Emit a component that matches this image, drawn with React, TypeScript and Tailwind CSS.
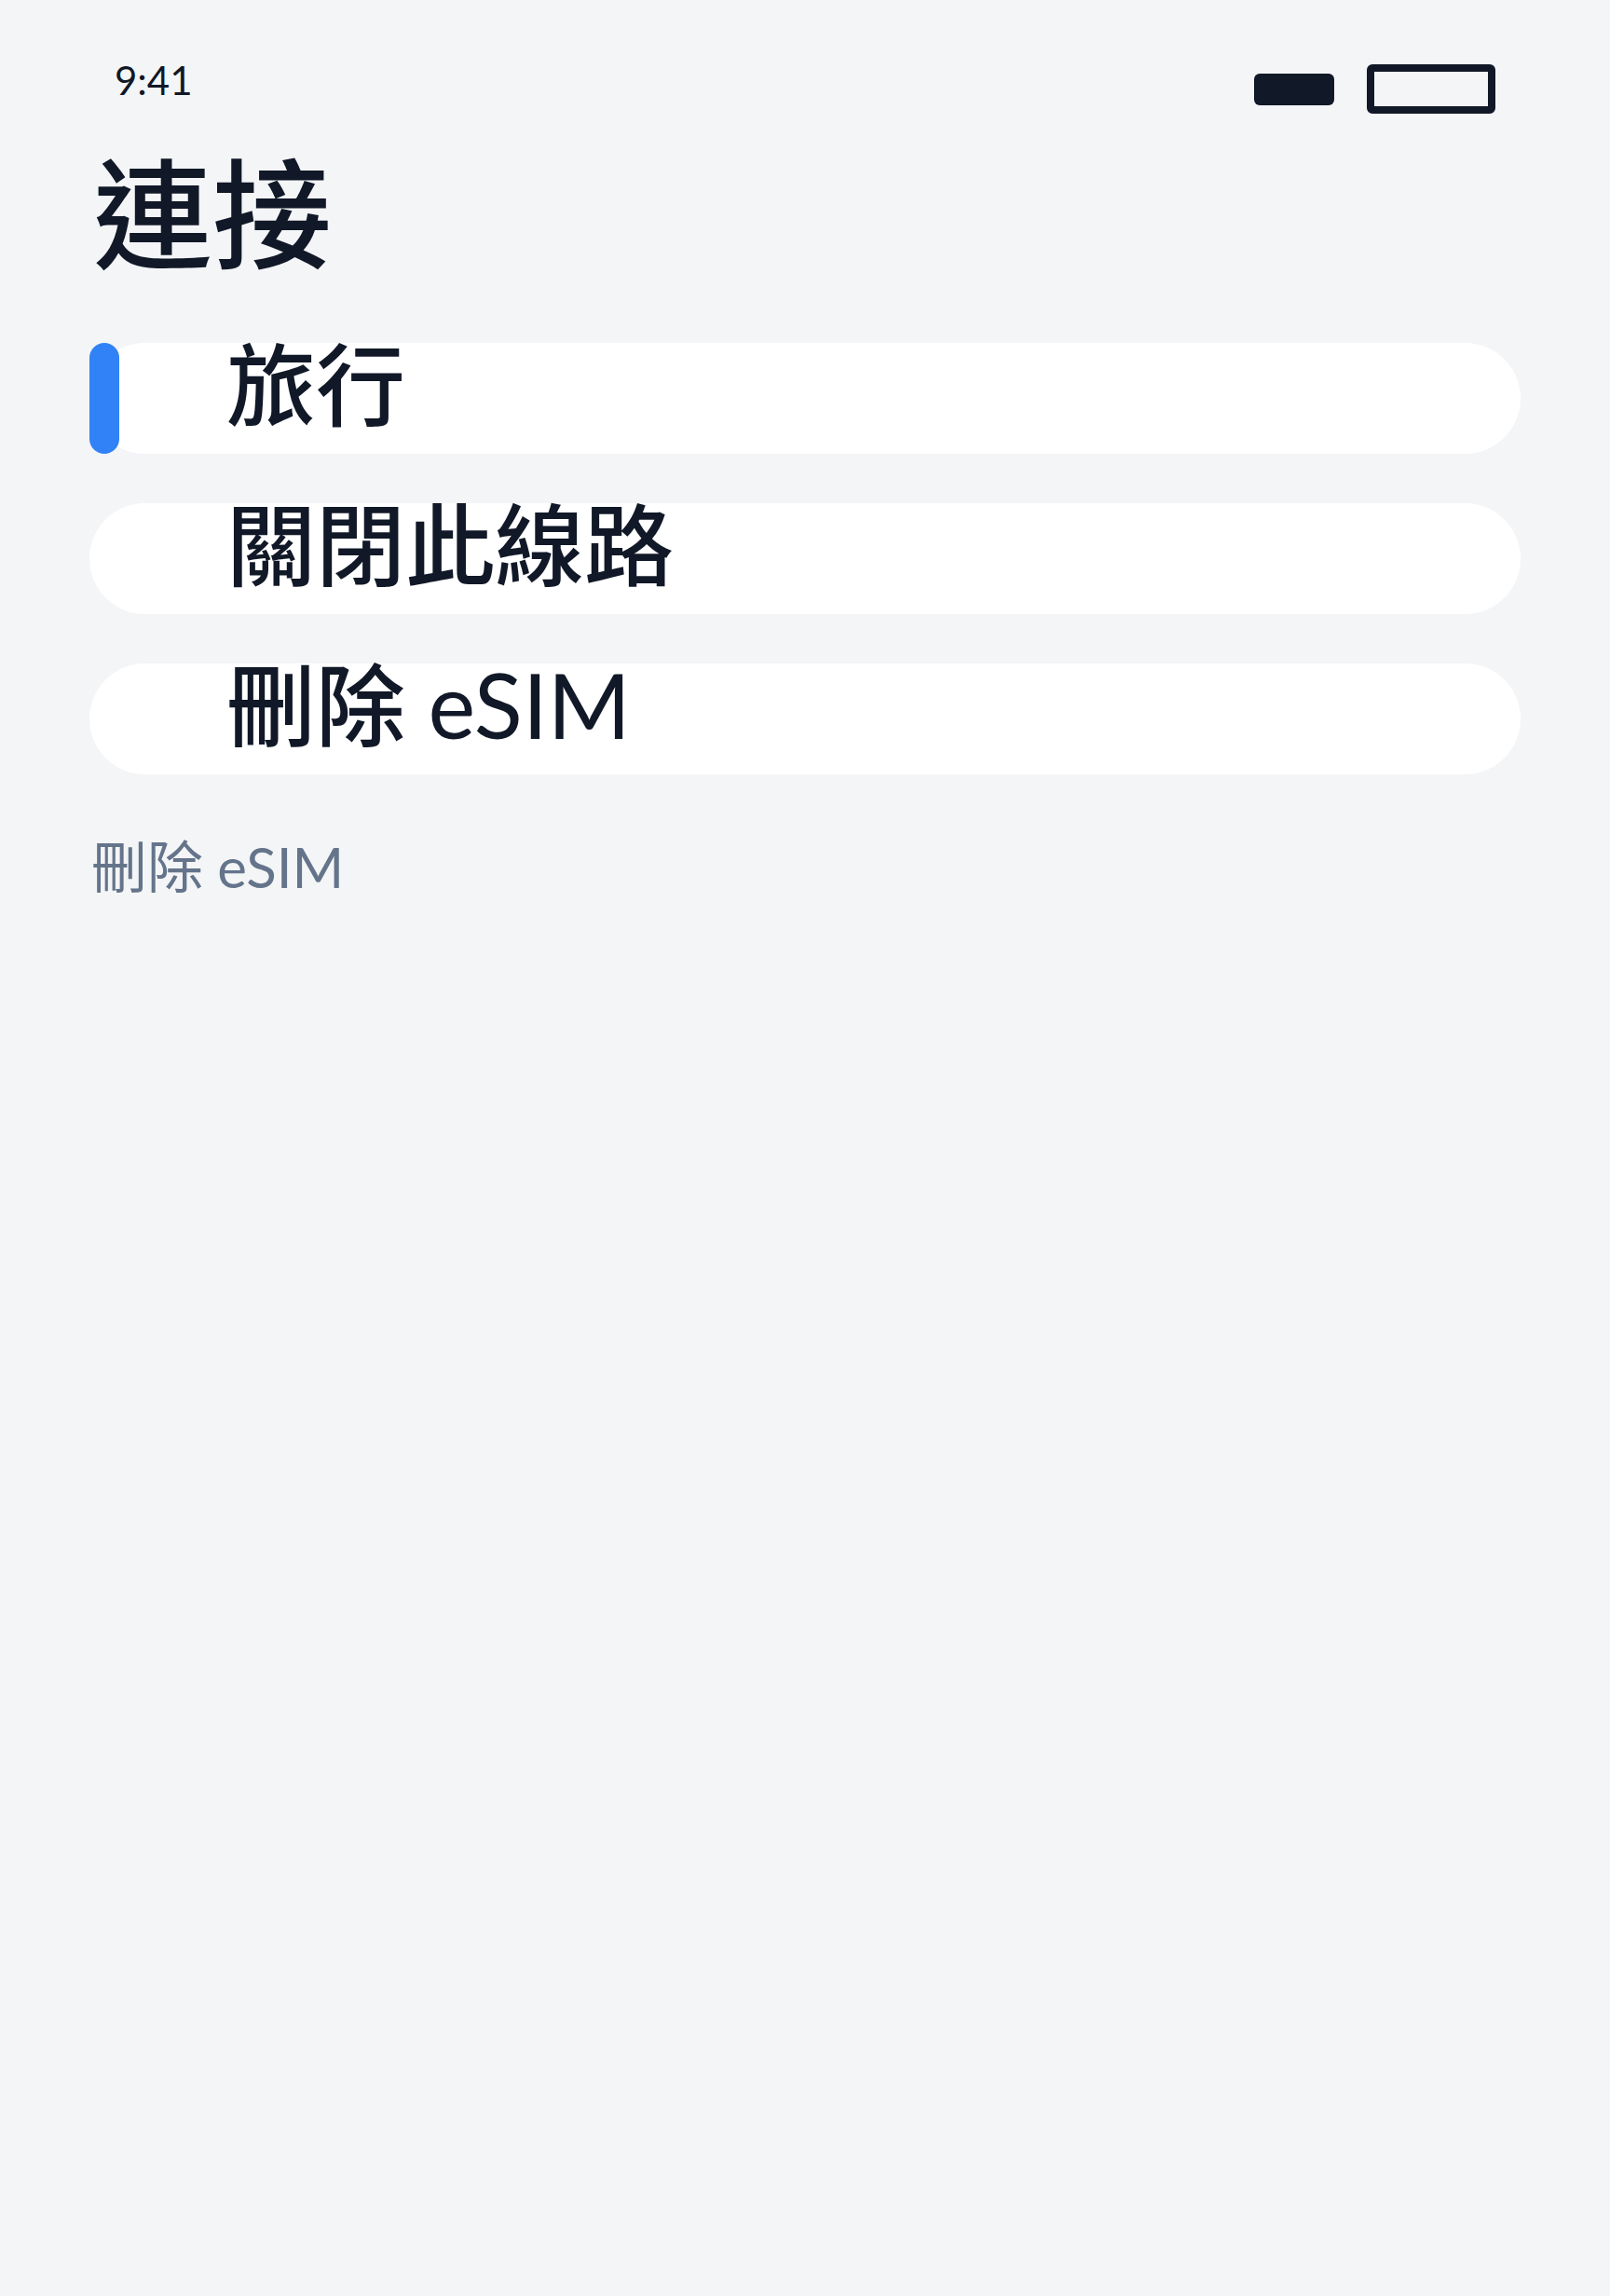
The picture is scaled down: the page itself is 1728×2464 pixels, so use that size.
import React from 'react';

// Connection settings screen for a single eSIM line
const font = {
  fontFamily: "Lato, 'Noto Sans CJK TC', sans-serif",
};

const rows = [
  { cjk: '旅行', latin: '', active: true },
  { cjk: '關閉此線路', latin: '', active: false },
  { cjk: '刪除', latin: ' eSIM', active: false },
];

const StatusBar = () => (
  <div className="h-[122px] pt-[65px] px-[27px] flex justify-between items-start">
    <span className="text-[42px] leading-none text-[#111827]">9:41</span>
    <div className="flex items-center gap-[35px] -mt-[65px] pt-[69px]">
      <div className="w-[86px] h-[34px] rounded-[6px] bg-[#111827]" />
      <div className="w-[138px] h-[53px] rounded-[6px] border-[8px] border-[#111827]" />
    </div>
  </div>
);

const Row = ({ cjk, latin, active }: { cjk: string; latin: string; active: boolean }) => (
  <div className="relative h-[119px] rounded-full bg-white flex items-start pl-[147px]">
    {active && (
      <span className="absolute left-0 top-0 h-full w-[32px] rounded-full bg-[#3182f6]" />
    )}
    <span className="-mt-[4px] text-[96px] leading-none text-[#111827] whitespace-nowrap">
      <span className="font-medium">{cjk}</span>
      {latin && <span className="font-normal">{latin}</span>}
    </span>
  </div>
);

export default function App() {
  return (
    <div className="min-h-[2464px] w-full bg-[#f4f5f7] px-[96px]" style={font}>
      <StatusBar />
      <h1 className="mt-[44px] pl-[4px] text-[128px] leading-none font-medium text-[#111827]">連接</h1>

      <div className="mt-[74px] flex flex-col gap-[53px]">
        {rows.map((r) => (
          <Row key={r.cjk} cjk={r.cjk} latin={r.latin} active={r.active} />
        ))}
      </div>

      <p className="mt-[69px] pl-[2px] text-[60px] leading-none text-[#64748b]">刪除 eSIM</p>
    </div>
  );
}
